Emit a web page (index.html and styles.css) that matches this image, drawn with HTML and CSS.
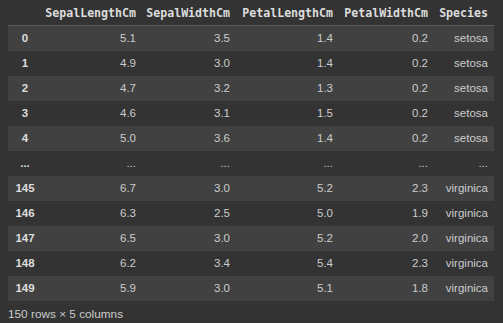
FILE: index.html
```html
<!DOCTYPE html>
<html>
<head>
<meta charset="utf-8">
<link rel="stylesheet" href="styles.css">
</head>
<body>
<div class="output">
  <table class="df">
    <colgroup>
      <col class="c-idx"><col class="c1"><col class="c2"><col class="c3"><col class="c4"><col class="c5">
    </colgroup>
    <thead>
      <tr><th></th><th>SepalLengthCm</th><th>SepalWidthCm</th><th>PetalLengthCm</th><th>PetalWidthCm</th><th>Species</th></tr>
    </thead>
    <tbody>
      <tr><th>0</th><td>5.1</td><td>3.5</td><td>1.4</td><td>0.2</td><td>setosa</td></tr>
      <tr><th>1</th><td>4.9</td><td>3.0</td><td>1.4</td><td>0.2</td><td>setosa</td></tr>
      <tr><th>2</th><td>4.7</td><td>3.2</td><td>1.3</td><td>0.2</td><td>setosa</td></tr>
      <tr><th>3</th><td>4.6</td><td>3.1</td><td>1.5</td><td>0.2</td><td>setosa</td></tr>
      <tr><th>4</th><td>5.0</td><td>3.6</td><td>1.4</td><td>0.2</td><td>setosa</td></tr>
      <tr><th>...</th><td>...</td><td>...</td><td>...</td><td>...</td><td>...</td></tr>
      <tr><th>145</th><td>6.7</td><td>3.0</td><td>5.2</td><td>2.3</td><td>virginica</td></tr>
      <tr><th>146</th><td>6.3</td><td>2.5</td><td>5.0</td><td>1.9</td><td>virginica</td></tr>
      <tr><th>147</th><td>6.5</td><td>3.0</td><td>5.2</td><td>2.0</td><td>virginica</td></tr>
      <tr><th>148</th><td>6.2</td><td>3.4</td><td>5.4</td><td>2.3</td><td>virginica</td></tr>
      <tr><th>149</th><td>5.9</td><td>3.0</td><td>5.1</td><td>1.8</td><td>virginica</td></tr>
    </tbody>
  </table>
  <p class="shape">150 rows × 5 columns</p>
</div>
</body>
</html>
```

FILE: styles.css
```css
html, body {
  margin: 0;
  padding: 0;
  background: #333333;
}
body {
  padding: 0 8px;
  font-family: "Liberation Sans", Arial, sans-serif;
  color: #cccccc;
}
.df {
  border-collapse: collapse;
  table-layout: fixed;
  width: 486px;
  font-size: 11.5px;
}
.c-idx { width: 32px; }
.c1 { width: 102px; }
.c2 { width: 94px; }
.c3 { width: 103px; }
.c4 { width: 95px; }
.c5 { width: 60px; }
.df thead th {
  height: 25px;
  padding: 0 6px 0 0;
  text-align: right;
  font-family: "DejaVu Sans Mono", "Liberation Mono", monospace;
  font-size: 11.6px;
  font-weight: bold;
  color: #dddddd;
  border-bottom: 1px solid #5a5a5a;
  white-space: nowrap;
  letter-spacing: 0;
}
.df tbody tr {
  height: 25px;
}
.df tbody tr:nth-child(odd) {
  background: #414141;
}
.df tbody th {
  text-align: center;
  font-weight: bold;
  padding: 0 0 0 2px;
  color: #dddddd;
}
.df td {
  text-align: right;
  padding: 0 6px 0 0;
  white-space: nowrap;
}
.shape {
  margin: 0;
  padding-top: 2px;
  height: 20px;
  line-height: 22px;
  font-size: 11.8px;
  color: #cccccc;
}
```
